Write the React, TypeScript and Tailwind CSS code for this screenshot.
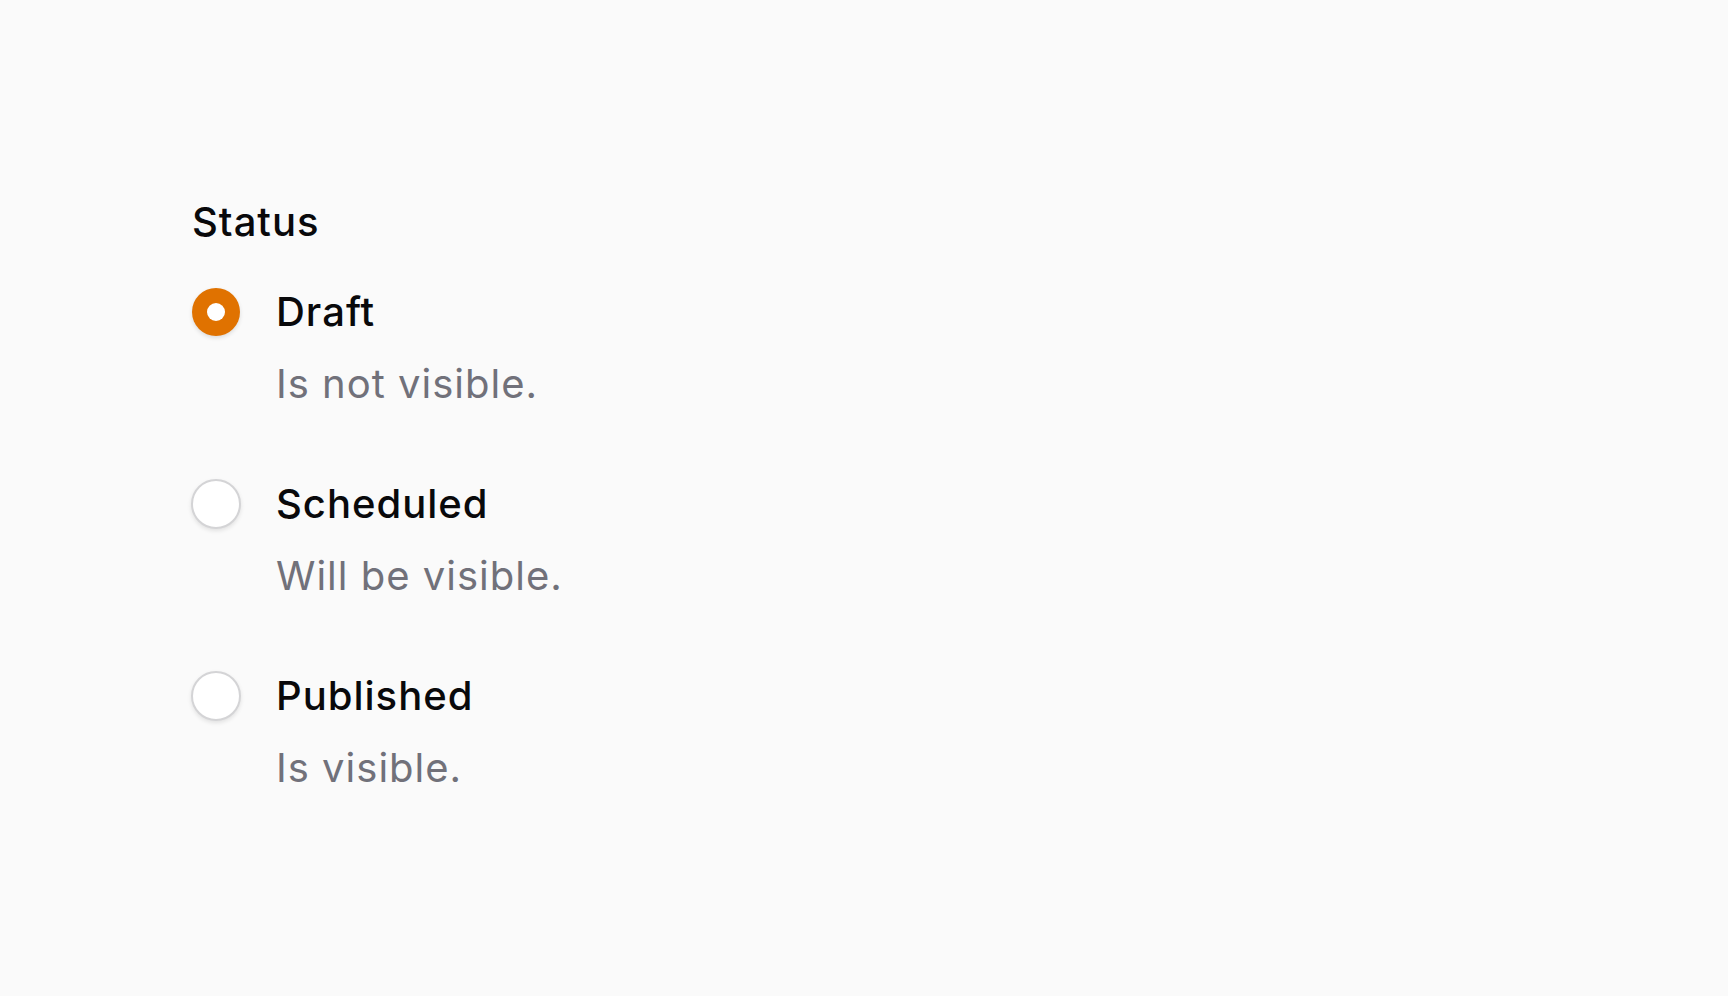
import React, { useState } from 'react';

const options = [
  { id: 'draft', name: 'Draft', description: 'Is not visible.' },
  { id: 'scheduled', name: 'Scheduled', description: 'Will be visible.' },
  { id: 'published', name: 'Published', description: 'Is visible.' },
];

export default function App() {
  const [selected, setSelected] = useState('draft');

  return (
    <div
      className="min-h-screen bg-[#fafafa] pl-[192px] pt-[190px]"
      style={{ fontFamily: 'Inter, "Noto Sans", sans-serif' }}
    >
      <fieldset>
        <legend className="text-[40px] leading-[64px] font-medium tracking-[0.025em] text-[#09090b]">Status</legend>
        <div className="mt-[26px] flex flex-col gap-[56px]">
          {options.map((option) => {
            const checked = selected === option.id;
            return (
              <label key={option.id} className="flex items-start gap-[36px] cursor-pointer">
                <span className="flex h-[64px] items-center">
                  <input
                    type="radio"
                    name="status"
                    className="sr-only"
                    checked={checked}
                    onChange={() => setSelected(option.id)}
                  />
                  {checked ? (
                    <span className="flex size-[48px] items-center justify-center rounded-full bg-[#e07200] shadow-[0_2px_4px_rgba(0,0,0,0.12)]">
                      <span className="size-[18px] rounded-full bg-white" />
                    </span>
                  ) : (
                    <span className="size-[50px] -mx-px rounded-full border-[2px] border-[#d4d4d6] bg-white shadow-[0_2px_4px_rgba(0,0,0,0.1)]" />
                  )}
                </span>
                <span className="flex flex-col">
                  <span className="text-[40px] leading-[64px] font-medium tracking-[0.025em] text-[#09090b]">{option.name}</span>
                  <span className="mt-2 text-[40px] leading-[64px] tracking-[0.025em] text-[#71717a]">{option.description}</span>
                </span>
              </label>
            );
          })}
        </div>
      </fieldset>
    </div>
  );
}
